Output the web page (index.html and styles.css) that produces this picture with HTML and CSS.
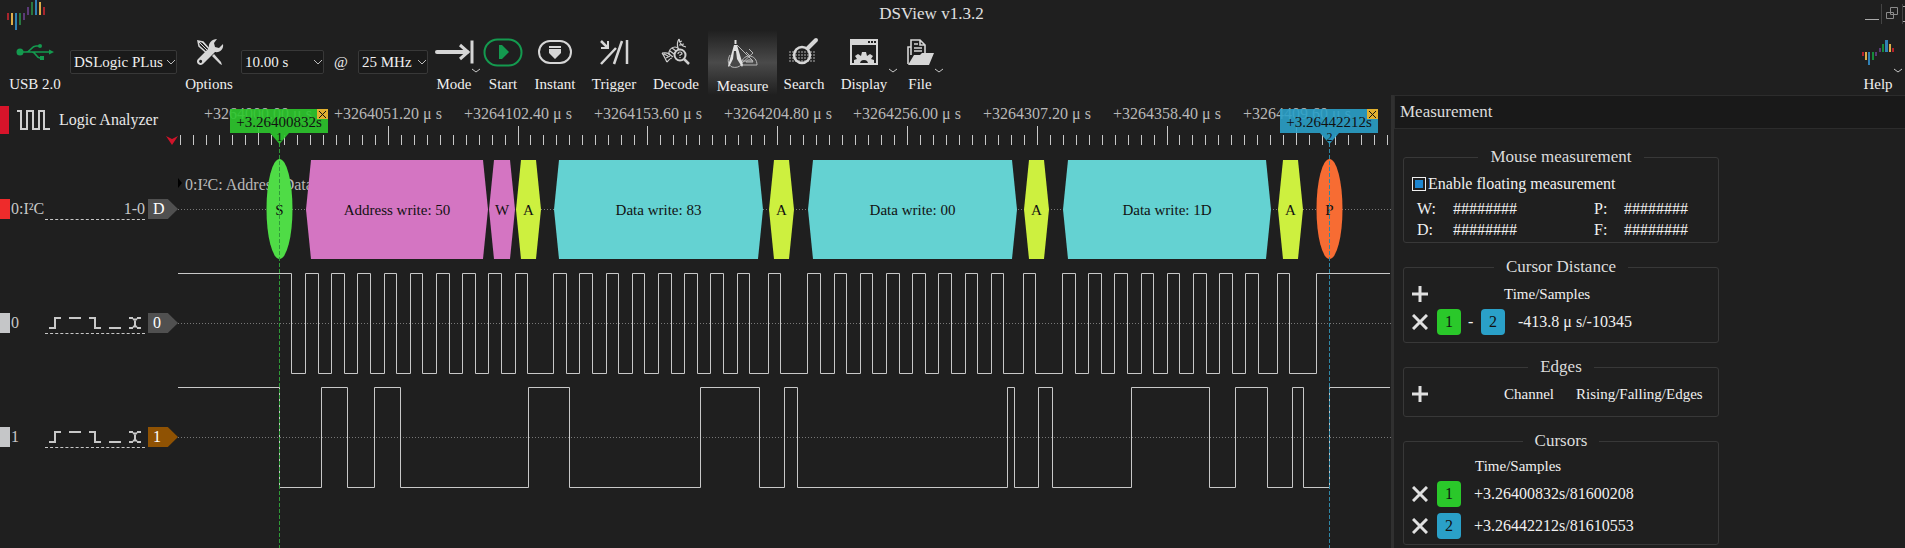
FILE: index.html
```html
<!DOCTYPE html>
<html lang="en">
<head>
<meta charset="utf-8">
<title>DSView v1.3.2</title>
<link rel="stylesheet" href="styles.css">
</head>
<body>
<header class="titlebar">
  <svg class="app-logo" width="48" height="32" viewBox="0 0 48 32" aria-hidden="true">
    <path fill="#a8252d" d="M7 13h2v7H7zM43 7h2v8h-2z"/><path fill="#dfae4a" d="M11 13h2v12h-2zM39 2h2v13h-2z"/><path fill="#3181b5" d="M15 13h2v17h-2zM35 0h2v15h-2z"/><path fill="#287840" d="M19 13h2v12h-2zM31 2h2v13h-2z"/><path fill="#5b3a78" d="M23 13h2v7h-2zM27 7h2v8h-2z"/>
  </svg>
  <h1 class="app-title">DSView v1.3.2</h1>
  <div class="window-buttons">
    <button aria-label="Minimize"><svg width="18" height="20"><path d="M2 15.500h14" stroke="#aaa"/></svg></button>
    <button class="split" aria-label="Restore"><svg width="20" height="20" fill="none" stroke="#8b8b8b"><path d="M4.500 8.500h7v6h-7zM8.500 3.500h7v7h-7z"/></svg></button>
    <button class="split" aria-label="Close"><svg width="2" height="20"><path d="M0 2.500h2M0 17.500h2" stroke="#aaa"/></svg></button>
  </div>
</header>

<nav class="toolbar">
  <button class="tool w-usb"><svg class="icon" width="38" height="30" viewBox="0 0 38 30" fill="none" stroke="#149a4f" stroke-width="1.6"><circle cx="4" cy="15" r="3.500" fill="#149a4f" stroke="none"/><path d="M4 15h30M10 15c5 0 5-6 10-6h3M16 15c4 0 4 6 8 6h1"/><path fill="#149a4f" stroke="none" d="M33 12.500l5 2.500-5 2.500zM24 19h4v4h-4z"/><circle cx="24" cy="9" r="2" fill="#149a4f" stroke="none"/></svg><span>USB 2.0</span></button>
  <span class="combo w-device"><select aria-label="Device"><option>DSLogic PLus</option></select><svg width="10" height="8"><path d="M1 2l4 4 4-4"/></svg></span>
  <button class="tool w-options"><svg class="icon" width="30" height="30" viewBox="0 0 30 30"><path d="M4 4l5 1 8 9-3 3-9-8z" fill="none" stroke="#d6d6d6" stroke-width="1.500"/><path d="M5 5l9 9M7 4l9 9" stroke="#d6d6d6"/><path d="M18 19l2-2 7 8 1 3-2-1z" fill="#d6d6d6"/><path d="M23 2l-3 4 1 4 4 1 4-4c1 5-3 9-8 8L9 27c-4 3-8-2-5-5l11-11c-1-5 3-9 8-9zM6 23a1.500 1.500 0 1 0 2 2 1.500 1.500 0 0 0-2-2z" fill="#d6d6d6" fill-rule="evenodd"/></svg><span>Options</span></button>
  <span class="combo w-duration"><select aria-label="Duration"><option>10.00 s</option></select><svg width="10" height="8"><path d="M1 2l4 4 4-4"/></svg></span>
  <span class="at">@</span>
  <span class="combo w-rate"><select aria-label="Sample rate"><option>25 MHz</option></select><svg width="10" height="8"><path d="M1 2l4 4 4-4"/></svg></span>
  <button class="tool w-mode"><svg class="icon" width="40" height="30" viewBox="0 0 40 30" fill="none" stroke="#d6d6d6" stroke-width="4"><path d="M3 15h30" stroke-linecap="round"/><path d="M26 8l8 7-8 7" stroke-width="3"/><path d="M38 3.500v23" stroke-width="3"/></svg><span>Mode</span><svg class="more" width="8" height="6"><path d="M0 1l4 3 4-3"/></svg></button>
  <button class="tool w-start"><svg class="icon" width="40" height="30" viewBox="0 0 40 30"><rect x="1.500" y="2.500" width="37" height="26" rx="13" fill="none" stroke="#149a4f" stroke-width="2"/><path d="M16 8h3l7 7-7 7h-3z" fill="#149a4f"/></svg><span>Start</span></button>
  <button class="tool w-instant"><svg class="icon" width="36" height="30" viewBox="0 0 36 30"><rect x="2" y="4" width="32" height="22" rx="11" fill="none" stroke="#d6d6d6" stroke-width="2"/><path d="M12 9h12v2H12zM12 12h12v4l-6 6-6-6z" fill="#d6d6d6"/></svg><span>Instant</span></button>
  <button class="tool w-trigger"><svg class="icon" width="32" height="30" viewBox="0 0 32 30" fill="none" stroke="#d6d6d6" stroke-width="2.500"><path d="M3 27L18 11M16 27l8-23M29 3v24M3 4l6 6"/><path d="M10 4v7H3" stroke-width="2"/></svg><span>Trigger</span></button>
  <button class="tool w-decode"><svg class="icon" width="30" height="30" viewBox="0 0 30 30" fill="none" stroke="#cfcfcf" stroke-width="1.200"><path d="M18 2c1 4 2 7 7 8M18 2c-2 3-2 6-1 9M18 5l3-1M18 8l5-1M1 16c4 0 7-1 8 2M1 16c2 2 3 6 5 9M6 25c2-2 3-4 5-4M3 17l4 2M5 21l4-2"/><path d="M8 18c-1-4 2-8 6-8 2 0 3 1 4 2M11 11l4 3M9 14l4 3M8 17l4 3"/><circle cx="19" cy="18" r="5.500" stroke-width="2"/><path d="M23 22l5 5" stroke-width="2.500"/><path d="M17 17q0-2 2-2t2 2l-2 1v1M19 20v1"/></svg><span>Decode</span></button>
  <button class="tool w-measure active"><svg class="icon" width="32" height="30" viewBox="0 0 32 30" fill="none" stroke="#b8b8b8"><path d="M10 6l16 16H15M22 10l4 4-12 11M19 13l4 4M14 26h16c0-5-3-9-8-9-4 0-8 4-8 9zM19 23h7c-1-3-6-3-7 0zM3 16c-3 5-2 10 2 12 4 1 7 0 9-2"/><path d="M7 6h3l6 20-1 2-5-8-1-8-2 0-1 8-4 8-1-1z" fill="#e0e0e0" stroke="none"/><path d="M8.500 1v4" stroke="#e0e0e0" stroke-width="2"/></svg><span>Measure</span></button>
  <button class="tool w-search"><svg class="icon" width="32" height="30" viewBox="0 0 32 30" fill="none"><path d="M1 15h27M1 18h26M1 21h27M1 24h26" stroke="#666" stroke-width="2" stroke-dasharray="2 1"/><circle cx="14" cy="18" r="8" stroke="#d6d6d6" stroke-width="2.500"/><path d="M20 11l8-8" stroke="#d6d6d6" stroke-width="4" stroke-linecap="round"/></svg><span>Search</span></button>
  <button class="tool w-display"><svg class="icon" width="30" height="30" viewBox="0 0 30 30"><path d="M2 3h26v24H2z" fill="none" stroke="#d6d6d6" stroke-width="2"/><path d="M2 3h26v5H2z" fill="#d6d6d6"/><path d="M19 5h2M22 5h2M25 5h2" stroke="#1f1f1f" stroke-width="2"/><path d="M5 27v-4l3-1-2-3 3-2 3 2 1-4h4l1 4 3-2 3 2-2 3 3 1v4h-6a4 4 0 0 0-8 0z" fill="#d6d6d6"/></svg><span>Display</span><svg class="more" width="8" height="6"><path d="M0 1l4 3 4-3"/></svg></button>
  <button class="tool w-file"><svg class="icon" width="28" height="30" viewBox="0 0 28 30"><path d="M5 18V3h9l5 5v8M14 3v5h5M8 7h4M8 11h8M8 14h8M5 10H2v17" fill="none" stroke="#d6d6d6" stroke-width="1.600"/><path d="M2 28l6-10h6l2-2h12l-5 12z" fill="#d6d6d6"/></svg><span>File</span><svg class="more" width="8" height="6"><path d="M0 1l4 3 4-3"/></svg></button>
  <button class="tool w-help"><svg class="icon" width="34" height="30" viewBox="0 0 34 30"><path fill="#b3202a" d="M1 15h2v4H1zM31 11h2v4h-2z"/><path fill="#dfae4a" d="M4 15h2v8H4zM28 7h2v8h-2z"/><path fill="#3181b5" d="M7 15h2v13H7zM24 3h3v12h-3z"/><path fill="#158a3a" d="M11 15h2v8h-2zM21 7h2v8h-2z"/><path fill="#5b3a78" d="M14 15h2v4h-2zM18 11h2v4h-2z"/></svg><span>Help</span><svg class="more" width="8" height="6"><path d="M0 1l4 3 4-3"/></svg></button>
</nav>

<main class="workspace">
  <section class="channels">
    <div class="device-row">
      <span class="device-tab"></span>
      <svg width="34" height="22" viewBox="0 0 34 22" fill="none" stroke="#cfcfcf" stroke-width="2"><path d="M0 2h4v18h6V2h6v18h6V2h5v18h6"/></svg>
      <span class="device-name">Logic Analyzer</span>
      <svg class="marker" width="12" height="9"><path d="M0 0l6 3 6-3-6 9z" fill="#d0142a"/></svg>
    </div>
    <div class="channel">
      <span class="tab decoder"></span><span class="name">0:I²C</span><span class="pins">1-0</span><span class="tag">D</span>
    </div>
    <div class="channel">
      <span class="tab"></span><span class="name">0</span>
      <span class="pins"><svg width="96" height="14" viewBox="0 0 96 14" fill="none" stroke="#c8c8c8" stroke-width="2"><path d="M0 12h6V2h6M20 2h12M40 2h6v10h6M60 12h12M80 2h4M88 2h4M80 12h4M88 12h4M84 3l2 1 2-1M84 11l2-1 2 1M86 4v6"/></svg></span><span class="tag">0</span>
    </div>
    <div class="channel">
      <span class="tab"></span><span class="name">1</span>
      <span class="pins"><svg width="96" height="14" viewBox="0 0 96 14" fill="none" stroke="#c8c8c8" stroke-width="2"><path d="M0 12h6V2h6M20 2h12M40 2h6v10h6M60 12h12M80 2h4M88 2h4M80 12h4M88 12h4M84 3l2 1 2-1M84 11l2-1 2 1M86 4v6"/></svg></span><span class="tag orange">1</span>
    </div>
  </section>

  <section class="plot" aria-label="Waveforms">
    <svg width="1213" height="453" viewBox="178 95 1213 453">
      <g id="ruler" class="ruler"></g>
      <path class="midline" d="M178 209.500h1213M178 323.500h1213M178 437.500h1213"/>
      <path d="M178 178l4 5-4 5z"/>
      <text class="row-title" x="185" y="190">0:I²C: Address/Data</text>
      <g id="annotations" class="annotations"></g>
      <g id="waves" class="waves"></g>
      <path class="cursor-line green" d="M279.500 143v405"/>
      <path class="cursor-line blue" d="M1329.500 143v405"/>
    </svg>
    <div class="flag one"><span>+3.26400832s</span><button aria-label="Remove cursor 1"><svg width="7" height="7"><path d="M0 0l7 7M7 0L0 7"/></svg></button><b>1</b></div>
    <div class="flag two"><span>+3.26442212s</span><button aria-label="Remove cursor 2"><svg width="7" height="7"><path d="M0 0l7 7M7 0L0 7"/></svg></button><b>2</b></div>
  </section>

  <aside class="dock">
    <h2 class="dock-title">Measurement</h2>
    <div class="dock-body">
      <fieldset class="group mouse">
        <legend>Mouse measurement</legend>
        <label class="check"><input type="checkbox" checked>Enable floating measurement</label>
        <dl class="values"><dt>W:</dt><dd>########</dd><dt>P:</dt><dd>########</dd><dt>D:</dt><dd>########</dd><dt>F:</dt><dd>########</dd></dl>
      </fieldset>
      <fieldset class="group distance">
        <legend>Cursor Distance</legend>
        <div class="line head"><button class="sign" aria-label="Add distance"><svg width="16" height="16"><path d="M8 0v16M0 8h16"/></svg></button><span class="col">Time/Samples</span></div>
        <div class="line"><button class="sign" aria-label="Remove distance"><svg width="16" height="16"><path d="M1 1l14 14M15 1L1 15"/></svg></button><button class="chip one">1</button><span class="dash">-</span><button class="chip two">2</button><span class="reading">-413.8 μ s/-10345</span></div>
      </fieldset>
      <fieldset class="group edges">
        <legend>Edges</legend>
        <div class="line head"><button class="sign" aria-label="Add edges"><svg width="16" height="16"><path d="M8 0v16M0 8h16"/></svg></button><span class="col">Channel</span><span class="col-next">Rising/Falling/Edges</span></div>
      </fieldset>
      <fieldset class="group cursors">
        <legend>Cursors</legend>
        <div class="line title">Time/Samples</div>
        <div class="line tall"><button class="sign" aria-label="Remove cursor"><svg width="16" height="16"><path d="M1 1l14 14M15 1L1 15"/></svg></button><button class="chip one">1</button><span class="reading">+3.26400832s/81600208</span></div>
        <div class="line tall"><button class="sign" aria-label="Remove cursor"><svg width="16" height="16"><path d="M1 1l14 14M15 1L1 15"/></svg></button><button class="chip two">2</button><span class="reading">+3.26442212s/81610553</span></div>
      </fieldset>
    </div>
  </aside>
</main>
<script src="plot.js"></script>
</body>
</html>
```

FILE: styles.css
```css
* { box-sizing: border-box; }

body {
  margin: 0;
  height: 100vh;
  display: flex;
  flex-direction: column;
  overflow: hidden;
  background: #1f1f1f;
  color: #f0f0f0;
  font: 16px/20px "Liberation Serif", "Times New Roman", serif;
}

button {
  padding: 0;
  border: 0;
  background: none;
  color: inherit;
  font: inherit;
}

svg { display: block; flex: none; }

/* Title bar */
.titlebar { display: flex; height: 32px; flex: none; }
.app-logo { margin-right: -48px; }
.app-title {
  flex: 1;
  margin: 0;
  text-align: center;
  font-size: 17px;
  font-weight: normal;
  line-height: 28px;
  color: #e0e0e0;
}
.window-buttons { display: flex; align-items: flex-start; padding-top: 4px; }
.window-buttons .split { border-left: 1px solid #444; }

/* Toolbar */
.toolbar { display: flex; height: 63px; flex: none; font-size: 15px; }
.tool {
  position: relative;
  flex: none;
  display: flex;
  flex-direction: column;
  align-items: center;
  gap: 7px;
  padding-top: 5px;
}
.tool.active {
  padding-top: 9px;
  margin-top: -2px;
  background: linear-gradient(#1f1f1f, #4a4a4a 50%, #1f1f1f);
}
.more { position: absolute; right: 0; top: 36px; fill: none; stroke: #c8c8c8; }
.w-usb { width: 70px; }
.w-options { width: 64px; }
.w-mode { width: 52px; }
.w-start { width: 46px; }
.w-instant { width: 58px; }
.w-trigger { width: 60px; }
.w-decode { width: 64px; }
.w-measure { width: 69px; }
.w-search { width: 54px; }
.w-display { width: 66px; }
.w-file { width: 46px; }
.w-help { width: 48px; margin-left: auto; margin-right: 3px; }
.combo { position: relative; flex: none; height: 24px; margin-top: 18px; }
.combo select {
  width: 100%;
  height: 100%;
  padding: 0 0 0 3px;
  appearance: none;
  border: 1px solid #383838;
  border-radius: 2px;
  background: #1a1a1a;
  color: inherit;
  font: inherit;
}
.combo svg { position: absolute; right: 1px; top: 8px; fill: none; stroke: #bbb; pointer-events: none; }
.w-device { width: 107px; }
.w-duration { width: 83px; }
.w-rate { width: 70px; }
.at { width: 34px; padding-top: 20px; text-align: center; }

/* Workspace */
.workspace { display: flex; flex: 1; min-height: 0; }
.channels { width: 178px; flex: none; color: #c8c8c8; }
.device-row {
  display: flex;
  align-items: center;
  gap: 8px;
  height: 57px;
  padding-bottom: 7px;
  color: #e8e8e8;
}
.device-tab { width: 10px; height: 28px; background: #d7142a; }
.device-name { white-space: nowrap; }
.device-row .marker { align-self: flex-end; margin-left: auto; }
.channel { display: flex; align-items: center; height: 114px; }
.tab { width: 10px; height: 20px; background: #c5c6c8; }
.tab.decoder { background: #ee2b2b; }
.name { width: 35px; padding-left: 1px; }
.pins {
  width: 100px;
  height: 22px;
  display: flex;
  justify-content: flex-end;
  align-items: center;
  border-bottom: 1px dashed #c8c8c8;
}
.tag {
  width: 30px;
  height: 20px;
  margin-left: 3px;
  padding-left: 5px;
  background: #505050;
  color: #fff;
  clip-path: polygon(0 0, 66% 0, 100% 50%, 66% 100%, 0 100%);
}
.tag.orange { background: #8f5203; }

/* Waveform canvas */
.plot { position: relative; flex: 1; min-width: 0; overflow: hidden; }
.ruler path { stroke: #c8c8c8; }
.ruler text, .row-title { fill: #b8b8b8; font-size: 16px; }
.ruler text, .annotations text { text-anchor: middle; }
.midline { stroke: #777; stroke-dasharray: 1 2; }
.waves path { fill: none; stroke: #c8c8c8; }
.annotations text { fill: #111; font-size: 15px; }
.cursor-line { stroke-dasharray: 4 2; }
.cursor-line.green { stroke: #2f9a38; }
.cursor-line.blue { stroke: #2f87a5; }
.flag {
  position: absolute;
  top: 14px;
  width: 98px;
  height: 24px;
  font-size: 15px;
  line-height: 26px;
  text-align: center;
  color: #111;
}
.flag.one { left: 52px; background: rgba(44, 200, 44, .9); }
.flag.two { left: 1102px; background: rgba(42, 160, 200, .9); }
.flag button {
  position: absolute;
  right: 0;
  top: 0;
  width: 11px;
  height: 10px;
  padding: 2px;
  background: #e0b030;
}
.flag button svg { stroke: #111; }
.flag b {
  position: absolute;
  left: 40px;
  top: 24px;
  width: 19px;
  height: 11px;
  line-height: 8px;
  font-size: 12px;
  font-weight: normal;
  background: inherit;
  clip-path: polygon(0 0, 100% 0, 50% 100%);
}

/* Measurement dock */
.dock { width: 514px; flex: none; border-left: 3px solid #303030; }
.dock-title {
  height: 34px;
  margin: 0;
  padding-left: 5px;
  border: 1px solid #2c2c2c;
  border-right: 0;
  background: #191919;
  color: #dcdcdc;
  font-size: 17px;
  font-weight: normal;
  line-height: 32px;
}
.dock-body { display: flex; flex-direction: column; gap: 14px; padding: 18px 9px 0; }
.group {
  width: 316px;
  margin: 0;
  padding: 3px 8px 0;
  border: 1px solid #383838;
  border-radius: 3px;
}
.group legend {
  margin: 0 auto;
  padding: 0 12px;
  color: #dcdcdc;
  font-size: 17px;
  line-height: 20px;
}
.group.mouse { height: 96px; }
.group.distance { height: 86px; }
.group.edges { height: 60px; }
.group.cursors { height: 114px; }
.check { display: flex; align-items: center; gap: 2px; height: 28px; }
.check input {
  appearance: none;
  width: 14px;
  height: 14px;
  margin: 0;
  border: 1px solid #f0f0f0;
  background: #1c86d1;
  box-shadow: inset 0 0 0 2px #1f1f1f;
}
.values {
  display: grid;
  grid-template-columns: 36px 141px 30px 1fr;
  line-height: 21px;
  margin: 0;
  padding-left: 5px;
}
.values dd { margin: 0; }
.line { display: flex; align-items: center; height: 28px; }
.line.tall { height: 32px; }
.line.head { font-size: 15px; }
.line.title { padding-left: 63px; height: 24px; font-size: 15px; }
.sign { width: 16px; height: 20px; }
.sign svg { stroke: #e0e0e0; stroke-width: 3; }
.col { margin-left: 76px; }
.col-next { margin-left: 22px; }
.chip {
  width: 24px;
  height: 26px;
  margin-left: 9px;
  border-radius: 4px;
  color: #111;
}
.chip.one { background: #2ac82a; }
.chip.two { background: #2aa0c8; }
.dash { width: 20px; margin-right: -9px; padding-left: 7px; }
.reading { margin-left: 13px; }
```

FILE: plot.js
```javascript
const NS = "http://www.w3.org/2000/svg";

function add(parent, name, attrs, text) {
  const el = document.createElementNS(NS, name);
  for (const key in attrs) el.setAttribute(key, attrs[key]);
  if (text) el.textContent = text;
  parent.appendChild(el);
}

// Time ruler: one labelled division is ten minor ticks, 51.20 μs.
const ruler = document.getElementById("ruler");
let ticks = "";
for (let i = -6; i <= 87; i++) {
  const x = Math.floor(258.4 + i * 12.98) + 0.5;
  ticks += `M${x} ${i % 10 === 0 ? 126 : 135}V145`;
}
add(ruler, "path", { d: ticks });
for (let k = 0; k <= 8; k++) {
  const time = (3264000 + k * 51.2).toFixed(2);
  add(ruler, "text", { x: Math.round(258.4 + k * 129.8), y: 119 }, `+${time} μ s`);
}

// Decoded I2C annotations: left, right, colour, label.
const annotations = document.getElementById("annotations");
[
  [306, 488, "#d475c2", "Address write: 50"],
  [489, 515, "#d475c2", "W"],
  [516, 541, "#cdf03f", "A"],
  [554, 763, "#64d2d2", "Data write: 83"],
  [769, 794, "#cdf03f", "A"],
  [808, 1017, "#64d2d2", "Data write: 00"],
  [1024, 1049, "#cdf03f", "A"],
  [1063, 1271, "#64d2d2", "Data write: 1D"],
  [1278, 1303, "#cdf03f", "A"]
].forEach(([l, r, fill, label]) => {
  add(annotations, "path", { d: `M${l} 209.5L${l + 5} 160H${r - 5}L${r} 209.5L${r - 5} 259H${l + 5}Z`, fill });
  add(annotations, "text", { x: (l + r) / 2, y: 215 }, label);
});
[[279.5, "#4fdc46", "S"], [1329.5, "#f76c33", "P"]].forEach(([cx, fill, label]) => {
  add(annotations, "ellipse", { cx, cy: 209, rx: 13, ry: 50, fill });
  add(annotations, "text", { x: cx, y: 215 }, label);
});

// Both lines idle high; each entry toggles the level.
const waves = document.getElementById("waves");
function wave(edges, high, low) {
  let level = high;
  let d = `M178 ${high}`;
  for (const x of edges) {
    level = level === high ? low : high;
    d += `H${x + 0.5}V${level}`;
  }
  add(waves, "path", { d: d + "H1390" });
}
wave([291, 305, 318, 331, 344, 357, 370, 384, 396, 410, 422, 436, 449, 462, 475, 488, 501, 515, 527,
  553, 566, 579, 592, 606, 618, 632, 644, 658, 671, 684, 697, 710, 723, 737, 749, 768, 780,
  807, 820, 834, 846, 860, 872, 886, 899, 912, 925, 938, 951, 965, 977, 991, 1003, 1023, 1035,
  1062, 1075, 1088, 1101, 1114, 1127, 1141, 1153, 1167, 1179, 1193, 1206, 1219, 1232, 1245, 1258,
  1277, 1289, 1316], 273.5, 373.5);
wave([279, 321, 347, 374, 400, 528, 569, 700, 759, 784, 797, 1007, 1014, 1038, 1052, 1131, 1209,
  1235, 1267, 1292, 1303, 1329], 387.5, 487.5);
```
